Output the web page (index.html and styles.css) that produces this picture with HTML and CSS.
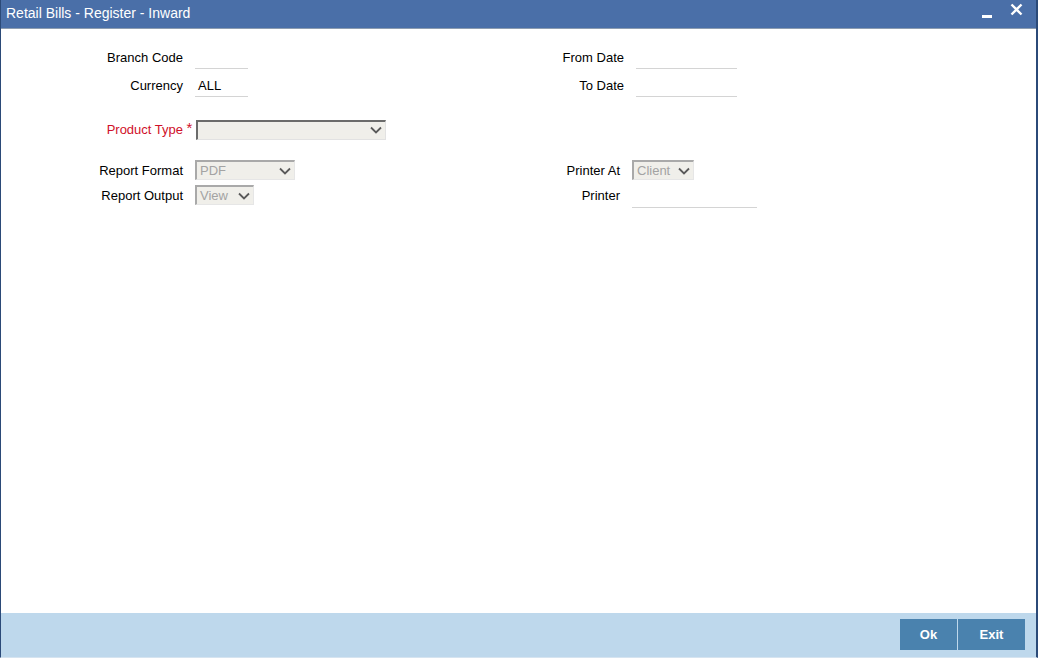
FILE: index.html
```html
<!DOCTYPE html>
<html lang="en">
<head>
    <meta charset="UTF-8">
    <title>Retail Bills - Register - Inward</title>
    <link rel="stylesheet" href="styles.css">
</head>
<body>
    <div class="window">
        <div class="titlebar">
            <span class="title">Retail Bills - Register - Inward</span>
            <div class="win-buttons">
                <span class="btn-min"></span>
                <svg class="btn-close" width="13" height="13" viewBox="0 0 13 13">
                    <path d="M1.5 1.5 L11.5 11.5 M11.5 1.5 L1.5 11.5" stroke="#fff" stroke-width="2.4" fill="none"/>
                </svg>
            </div>
        </div>

        <div class="content">
            <!-- branch / dates -->
            <div class="section top">
                <div class="col left">
                    <div class="field">
                        <label class="lbl">Branch Code</label>
                        <div class="line-input short"></div>
                    </div>
                    <div class="field">
                        <label class="lbl">Currency</label>
                        <div class="line-input short">ALL</div>
                    </div>
                </div>
                <div class="col right">
                    <div class="field">
                        <label class="lbl rlbl">From Date</label>
                        <div class="line-input date"></div>
                    </div>
                    <div class="field">
                        <label class="lbl rlbl">To Date</label>
                        <div class="line-input date"></div>
                    </div>
                </div>
            </div>

            <!-- product type -->
            <div class="section product">
                <div class="field">
                    <label class="lbl req">Product Type</label>
                    <span class="star">*</span>
                    <div class="select active wide">
                        <span class="val"></span>
                        <svg class="chev" width="12" height="8" viewBox="0 0 12 8"><path d="M1 1.5 L6 6.5 L11 1.5" stroke="#5a5a5a" stroke-width="1.8" fill="none"/></svg>
                    </div>
                </div>
            </div>

            <!-- report options -->
            <div class="section report">
                <div class="col left">
                    <div class="field small">
                        <label class="lbl">Report Format</label>
                        <div class="select disabled fmt">
                            <span class="val">PDF</span>
                            <svg class="chev" width="12" height="8" viewBox="0 0 12 8"><path d="M1 1.5 L6 6.5 L11 1.5" stroke="#5a5a5a" stroke-width="1.8" fill="none"/></svg>
                        </div>
                    </div>
                    <div class="field small">
                        <label class="lbl">Report Output</label>
                        <div class="select disabled out">
                            <span class="val">View</span>
                            <svg class="chev" width="12" height="8" viewBox="0 0 12 8"><path d="M1 1.5 L6 6.5 L11 1.5" stroke="#5a5a5a" stroke-width="1.8" fill="none"/></svg>
                        </div>
                    </div>
                </div>
                <div class="col right">
                    <div class="field small">
                        <label class="lbl plbl">Printer At</label>
                        <div class="select disabled client">
                            <span class="val">Client</span>
                            <svg class="chev" width="12" height="8" viewBox="0 0 12 8"><path d="M1 1.5 L6 6.5 L11 1.5" stroke="#5a5a5a" stroke-width="1.8" fill="none"/></svg>
                        </div>
                    </div>
                    <div class="field small">
                        <label class="lbl plbl">Printer</label>
                        <div class="line-input printer"></div>
                    </div>
                </div>
            </div>
        </div>

        <div class="footer">
            <button class="btn">Ok</button>
            <button class="btn exit">Exit</button>
        </div>
    </div>
</body>
</html>
```

FILE: styles.css
```css
* {
    margin: 0;
    padding: 0;
    box-sizing: border-box;
}

body {
    font-family: "Liberation Sans", Arial, sans-serif;
    font-size: 13px;
    color: #000;
    background: #fff;
    width: 1038px;
    height: 658px;
    overflow: hidden;
}

.window {
    height: 658px;
    display: flex;
    flex-direction: column;
    border-left: 1px solid #2b4a78;
    border-right: 2px solid #2b4a78;
    border-bottom: 1px solid #d6e4f0;
}

.titlebar {
    height: 29px;
    background: #4a6fa8;
    border-bottom: 1px solid #8c9cb0;
    display: flex;
    align-items: center;
    justify-content: space-between;
    padding: 0 13px 2px 5px;
    color: #fff;
}

.title {
    font-size: 14px;
}

.win-buttons {
    display: flex;
    align-items: center;
    gap: 18px;
}

.btn-min {
    width: 10px;
    height: 3px;
    background: #fff;
    margin-top: 6px;
}

.btn-close {
    margin-top: -7px;
}

.content {
    flex: 1;
    padding-top: 19px;
}

.section {
    display: flex;
}

.col {
    display: flex;
    flex-direction: column;
}

.col.left {
    width: 539px;
}

.top .col {
    gap: 7px;
}

.top .lbl {
    padding-bottom: 2px;
}

.field {
    display: flex;
    align-items: center;
    height: 21px;
}

.lbl {
    width: 182px;
    text-align: right;
    margin-right: 12px;
}

.rlbl {
    width: 84px;
}

.plbl {
    width: 80px;
}

.line-input {
    height: 21px;
    border-bottom: 1px solid #d4d4d4;
    padding: 1px 3px 0;
    line-height: 17px;
}

.short {
    width: 53px;
}

.date {
    width: 101px;
}

.printer {
    width: 125px;
    height: 23px;
    margin-top: 3px;
}

.product {
    margin-top: 22px;
}

.product .lbl {
    margin-right: 0;
}

.req, .star {
    color: #d0102a;
}

.star {
    width: 13px;
    text-align: center;
    font-size: 15px;
    margin-top: -4px;
}

.select {
    height: 20px;
    display: flex;
    align-items: center;
    justify-content: space-between;
    background: #f0efea;
    padding: 0 3px 0 3px;
}

.select.active {
    border-top: 2px solid #6b6b6b;
    border-left: 2px solid #6b6b6b;
    border-bottom: 1px solid #e2e2e2;
    border-right: 1px solid #e2e2e2;
}

.select.disabled {
    border-top: 2px solid #a9a9a9;
    border-left: 2px solid #a9a9a9;
    border-bottom: 1px solid #e6e6e6;
    border-right: 1px solid #e6e6e6;
    color: #a3a3a3;
}

.wide {
    width: 190px;
}

.fmt {
    width: 100px;
}

.out {
    width: 59px;
}

.client {
    width: 62px;
}

.report {
    margin-top: 20px;
}

.report .col {
    gap: 5px;
}

.small {
    height: 20px;
}

.footer {
    height: 44px;
    background: #bed8ec;
    display: flex;
    justify-content: flex-end;
    align-items: center;
    gap: 1px;
    padding: 0 11px 1px 0;
}

.btn {
    height: 31px;
    width: 57px;
    border: none;
    background: #4a82ae;
    color: #fff;
    font-family: "Liberation Sans", Arial, sans-serif;
    font-size: 13px;
    font-weight: bold;
}

.btn.exit {
    width: 67px;
}
```
